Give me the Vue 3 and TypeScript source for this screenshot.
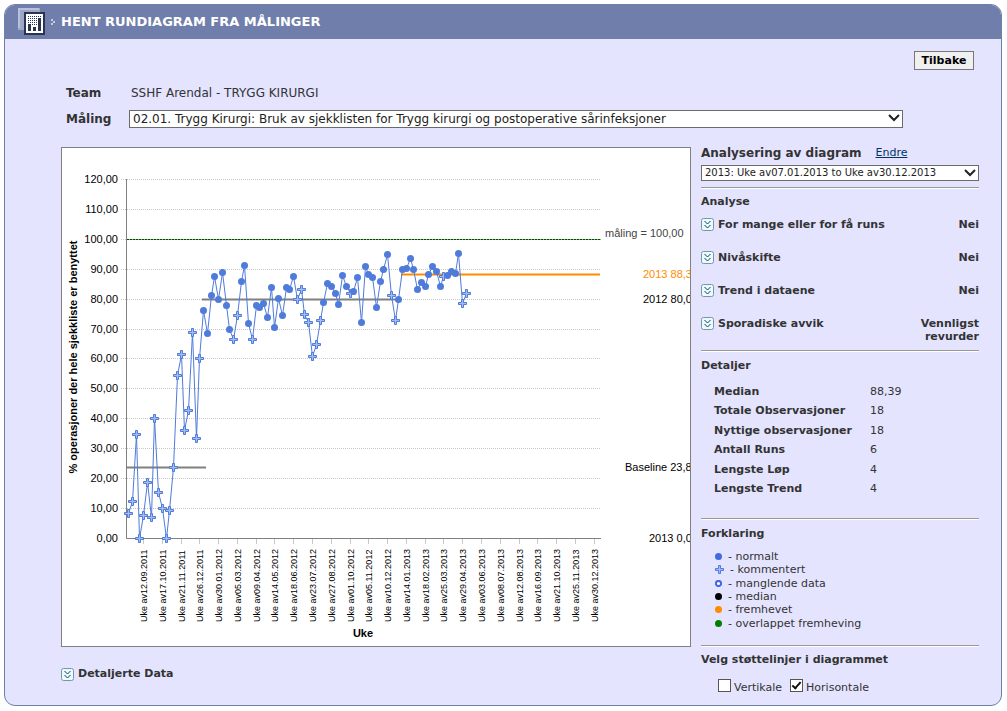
<script setup lang="ts">
import { computed, ref } from 'vue'

interface Point {
  value: number
  commented: boolean
}

// A trailing "k" marks a commented measurement.
const series =
  '8.4k 12.3k 34.8k 0k 7.6k 18.7k 7.1k 40k 15.3k 10k 0k 9.4k 23.8k 54.4k 61.4k 36.2k 42.8k 68.9k 33.5k 60.1k ' +
  '76.2 68.5 81.2 87.5 79.8 88.9 77.8 69.8 66.5k 74.6k 85.8 91.2 71.8 66.6k 77.8 77.3 78.6 73.8 83.8 70.5 80.1 ' +
  '74.5 83.8 83.2 87.5 79.8k 83.2k 74.9k 72.3k 60.8k 64.9k 72.9k 78.9 85.3 84.2 82 78.1 87.8 84.2 82k 82.5 87.2 ' +
  '72.3 90.8 88.2 87.2 77.3 85.8 89.8 94.9 81.3k 72.9k 79.8 89.8 90.2 93.5 89.8 83.2 85.6 84.2 88.3 90.8 89.2 ' +
  '84.2 87.6k 88 89.3 88.6 95.2 78.5k 82k'

const points: Point[] = series.split(' ').map((s) => ({
  value: parseFloat(s),
  commented: s.endsWith('k'),
}))

const xOf = (week: number): number => Math.floor(66.5 + week * 3.755)
const yOf = (value: number): number => Math.round(390 - value * 2.992)

const marks = points.map((p, i) => ({ ...p, x: xOf(i), y: yOf(p.value) }))
const line = marks.map((m) => `${m.x},${m.y}`).join(' ')

const levels = Array.from({ length: 13 }, (_, i) => i * 10)
const dates = [
  '12.09.2011', '17.10.2011', '21.11.2011', '26.12.2011', '30.01.2012', '05.03.2012', '09.04.2012',
  '14.05.2012', '18.06.2012', '23.07.2012', '27.08.2012', '01.10.2012', '05.11.2012', '10.12.2012',
  '14.01.2013', '18.02.2013', '25.03.2013', '29.04.2013', '03.06.2013', '08.07.2013', '12.08.2013',
  '16.09.2013', '21.10.2013', '25.11.2013', '30.12.2013',
]
const ticks = dates.map((d, i) => ({ label: `Uke av${d}`, x: xOf(4 + i * 5) }))

const vertical = ref(false)
const horizontal = ref(true)
const gridLevels = computed(() => (horizontal.value ? levels.slice(1) : []))

const analyses = [
  { name: 'For mange eller for få runs', result: 'Nei' },
  { name: 'Nivåskifte', result: 'Nei' },
  { name: 'Trend i dataene', result: 'Nei' },
  { name: 'Sporadiske avvik', result: 'Vennligst revurder' },
]

const details = [
  ['Median', '88,39'],
  ['Totale Observasjoner', '18'],
  ['Nyttige observasjoner', '18'],
  ['Antall Runs', '6'],
  ['Lengste Løp', '4'],
  ['Lengste Trend', '4'],
]

const legend = [
  { kind: 'normal', text: 'normalt' },
  { kind: 'plus', text: 'kommentert' },
  { kind: 'missing', text: 'manglende data' },
  { kind: 'median', text: 'median' },
  { kind: 'highlight', text: 'fremhevet' },
  { kind: 'overlap', text: 'overlappet fremheving' },
]
</script>

<template>
  <main class="panel">
    <header class="head">
      <svg class="logo" width="28" height="28" viewBox="0 0 28 28" shape-rendering="crispEdges" aria-hidden="true">
        <rect x="0" y="0" width="22" height="22" rx="2" fill="#9da7c8" />
        <path d="M1 20V1H21" fill="none" stroke="#b9c0d8" stroke-width="2" />
        <rect x="6" y="4" width="21" height="23" fill="#2b3350" />
        <rect x="8" y="6" width="17" height="19" fill="#fff" />
        <path d="M10 8.5H23M10 10.5H19M10 12.5H19M10 14.5H19M14 16.5H19" stroke="#2b3350" stroke-dasharray="1 1" />
        <path d="M10 23V16H13V23ZM15 23V19H18V23ZM20 23V10H23V23Z" fill="#2b3350" />
      </svg>
      <svg class="chev" width="4" height="6" viewBox="0 0 4 6" shape-rendering="crispEdges" aria-hidden="true">
        <path d="M0 0h2v2h-2zM2 2h2v2h-2zM0 4h2v2h-2z" fill="#c3cae2" />
      </svg>
      <h1>HENT RUNDIAGRAM FRA MÅLINGER</h1>
    </header>

    <div class="content">
      <div class="actions"><button type="button" class="back">Tilbake</button></div>

      <div class="row team">
        <span class="key">Team</span>
        <span>SSHF Arendal - TRYGG KIRURGI</span>
      </div>
      <div class="row measure">
        <label class="key" for="measure">Måling</label>
        <span class="pick">
          <select id="measure">
            <option>02.01. Trygg Kirurgi: Bruk av sjekklisten for Trygg kirurgi og postoperative sårinfeksjoner</option>
          </select>
          <svg class="arrow" width="12" height="8" viewBox="0 0 12 8" aria-hidden="true"><path d="M1 1L6 6L11 1" /></svg>
        </span>
      </div>

      <div class="columns">
        <section class="left">
          <svg class="chart" viewBox="0 0 628 498" role="img" aria-label="Rundiagram">
            <text class="ytitle" transform="translate(15 209) rotate(-90)" text-anchor="middle">% operasjoner der hele sjekkliste er benyttet</text>
            <text v-for="l in levels" :key="l" class="num" x="56" :y="yOf(l) + 4" text-anchor="end">{{ l }},00</text>
            <g class="grid">
              <line v-for="l in gridLevels" :key="l" x1="59" x2="538" :y1="yOf(l) + 0.5" :y2="yOf(l) + 0.5" />
            </g>
            <g v-if="vertical" class="grid">
              <line v-for="t in ticks" :key="t.label" :x1="t.x + 0.5" :x2="t.x + 0.5" y1="31" y2="390" />
            </g>
            <line class="goal" x1="65" x2="539" y1="91.5" y2="91.5" />
            <line class="goal-dash" x1="65" x2="539" y1="91.5" y2="91.5" />
            <line class="ref" x1="65" x2="144" y1="319.5" y2="319.5" />
            <line class="ref" x1="140" x2="338" y1="151.5" y2="151.5" />
            <line class="ref orange" x1="339" x2="538" y1="126.5" y2="126.5" />
            <path class="axis" d="M64.5 31V390.5H539" />
            <g v-for="t in ticks" :key="t.label">
              <line class="tick" :x1="t.x + 0.5" :x2="t.x + 0.5" y1="391" y2="396" />
              <text class="date" :transform="`translate(${t.x + 4} 474) rotate(-90)`">{{ t.label }}</text>
            </g>
            <g transform="translate(0.5 0.5)">
              <polyline class="series" :points="line" />
              <template v-for="(m, i) in marks" :key="i">
                <path v-if="m.commented" class="plus" :transform="`translate(${m.x} ${m.y})`" d="M-1 -4H1V-1H4V1H1V4H-1V1H-4V-1H-1Z" />
                <circle v-else class="dot" :cx="m.x" :cy="m.y" r="3.5" />
              </template>
            </g>
            <text class="num goal-text" x="543" y="89">måling = 100,00</text>
            <text class="num orange-text" x="581" y="130">2013 88,39</text>
            <text class="num" x="581" y="155">2012 80,00</text>
            <text class="num" x="563" y="323">Baseline 23,81</text>
            <text class="num" x="587" y="394">2013 0,00</text>
            <text class="xtitle" x="301" y="489" text-anchor="middle">Uke</text>
          </svg>
          <div class="more">
            <button type="button" class="expand" aria-label="Vis detaljerte data">
              <svg width="13" height="13" viewBox="0 0 13 13"><rect x="0.5" y="0.5" width="12" height="12" rx="2" /><path d="M3.5 3L6.5 6L9.5 3M3.5 7L6.5 10L9.5 7" /></svg>
            </button>
            <b>Detaljerte Data</b>
          </div>
        </section>

        <aside class="side">
          <div class="side-head">
            <h2><label for="period">Analysering av diagram</label></h2>
            <a href="#">Endre</a>
          </div>
          <span class="pick small">
            <select id="period">
              <option>2013: Uke av07.01.2013 to Uke av30.12.2013</option>
            </select>
            <svg class="arrow" width="12" height="8" viewBox="0 0 12 8" aria-hidden="true"><path d="M1 1L6 6L11 1" /></svg>
          </span>

          <section class="block analyse">
            <h3>Analyse</h3>
            <div v-for="a in analyses" :key="a.name" class="analysis">
              <button type="button" class="expand" :aria-label="a.name">
                <svg width="13" height="13" viewBox="0 0 13 13"><rect x="0.5" y="0.5" width="12" height="12" rx="2" /><path d="M3.5 3L6.5 6L9.5 3M3.5 7L6.5 10L9.5 7" /></svg>
              </button>
              <b class="name">{{ a.name }}</b>
              <b class="result">{{ a.result }}</b>
            </div>
          </section>

          <section class="block detail">
            <h3>Detaljer</h3>
            <dl>
              <template v-for="d in details" :key="d[0]">
                <dt>{{ d[0] }}</dt>
                <dd>{{ d[1] }}</dd>
              </template>
            </dl>
          </section>

          <section class="block explain">
            <h3>Forklaring</h3>
            <ul>
              <li v-for="g in legend" :key="g.kind">
                <svg v-if="g.kind === 'plus'" class="plus" width="9" height="9" viewBox="-4.5 -4.5 9 9"><path d="M-1 -4H1V-1H4V1H1V4H-1V1H-4V-1H-1Z" /></svg>
                <svg v-else-if="g.kind === 'missing'" class="missing" width="7" height="7" viewBox="0 0 7 7"><circle cx="3.5" cy="3.5" r="2.6" /></svg>
                <svg v-else :class="g.kind" width="7" height="7" viewBox="0 0 7 7"><circle cx="3.5" cy="3.5" r="3.5" /></svg>
                <span>- {{ g.text }}</span>
              </li>
            </ul>
          </section>

          <section class="block lines">
            <h3>Velg støttelinjer i diagrammet</h3>
            <div class="checks">
              <label><input v-model="vertical" type="checkbox" />Vertikale</label>
              <label><input v-model="horizontal" type="checkbox" />Horisontale</label>
            </div>
          </section>
        </aside>
      </div>
    </div>
  </main>
</template>

<style>
body {
  background: #fff;
}
</style>

<style scoped>
.panel {
  margin: 4px 5px 0 4px;
  border: 1px solid #6f7eaa;
  border-radius: 11px;
  background: #e4e4ff;
  overflow: hidden;
  color: #333;
  font: 11px/14px "DejaVu Sans", sans-serif;
}
h1, h2, h3, dl, dd, ul {
  margin: 0;
  padding: 0;
}
.head {
  display: flex;
  align-items: center;
  height: 34px;
  padding-left: 13px;
  background: #6f7eaa;
}
.chev {
  margin: 0 6px 0 5px;
}
h1 {
  color: #fff;
  font-size: 13px;
  line-height: 16px;
}
.content {
  padding: 12px 22px 0 56px;
}
.actions {
  display: flex;
  justify-content: flex-end;
  padding-right: 5px;
}
.back {
  width: 60px;
  height: 19px;
  padding: 0;
  border: 1px solid #777;
  background: #f0f0f0;
  color: #000;
  font: bold 11px/14px "DejaVu Sans", sans-serif;
}
.row {
  display: flex;
  align-items: center;
  padding-left: 5px;
  font-size: 12px;
}
.team {
  height: 16px;
  margin-top: 15px;
}
.measure {
  height: 18px;
  margin-top: 9px;
  padding-right: 76px;
}
.key {
  flex: 0 0 65px;
  font-weight: bold;
}
.measure .key {
  flex-basis: 63px;
}
.pick {
  display: block;
  position: relative;
  flex: 1;
}
select {
  display: block;
  width: 100%;
  height: 18px;
  padding: 0 20px 0 3px;
  border: 1px solid #6b6b6b;
  border-radius: 0;
  background: #fff;
  color: #222;
  font: 12px/14px "DejaVu Sans", sans-serif;
  appearance: none;
}
.small select {
  height: 16px;
  font-size: 10px;
}
.arrow {
  position: absolute;
  right: 3px;
  top: 4px;
  fill: none;
  stroke: #222;
  stroke-width: 2;
}
.columns {
  display: grid;
  grid-template-columns: minmax(0, 1fr) 278px;
  gap: 10px;
  margin-top: 19px;
}
.chart {
  display: block;
  box-sizing: border-box;
  width: 100%;
  height: auto;
  border: 1px solid #808080;
  background: #fff;
  overflow: hidden;
  font-family: "Liberation Sans", sans-serif;
}
.num {
  font-size: 11px;
  fill: #000;
}
.goal-text {
  fill: #444;
}
.orange-text {
  fill: #ff8c00;
}
.date {
  font-size: 9px;
  fill: #000;
}
.ytitle, .xtitle {
  font-size: 11px;
  font-weight: bold;
  fill: #000;
}
.grid line {
  stroke: #c8c8c8;
  stroke-dasharray: 1 1;
}
.goal {
  stroke: #6cc06c;
}
.goal-dash {
  stroke: #004d00;
  stroke-dasharray: 2 1;
}
.ref {
  stroke: #808080;
  stroke-width: 2;
}
.orange {
  stroke: #ff8c00;
}
.axis {
  fill: none;
  stroke: #808080;
}
.tick {
  stroke: #c8c8c8;
}
.series {
  fill: none;
  stroke: #4f7bdb;
}
.dot {
  fill: #4f7bdb;
}
.plus {
  fill: #a4bbef;
  stroke: #4f7bdb;
}
.more {
  display: flex;
  align-items: center;
  gap: 4px;
  height: 14px;
  margin: 20px 0 24px;
}
.expand {
  flex: none;
  display: block;
  width: 13px;
  height: 13px;
  padding: 0;
  border: 0;
  background: none;
}
.expand svg {
  display: block;
  fill: #e8fbff;
  stroke: #7e93a8;
}
.expand path {
  fill: none;
  stroke: #223a55;
}
.side-head {
  display: flex;
  align-items: center;
  gap: 14px;
  height: 12px;
  margin-bottom: 6px;
}
h2 {
  font-size: 12px;
}
a {
  color: #003366;
}
h3 {
  font-size: 11px;
  line-height: 14px;
}
.block {
  border-top: 1px solid #999;
  box-shadow: inset 0 1px #fff;
  padding-top: 7px;
}
.analyse {
  margin-top: 6px;
  height: 155px;
}
.analysis {
  display: flex;
  align-items: flex-start;
  height: 33px;
  gap: 4px;
  line-height: 13px;
}
.analyse h3 {
  margin-bottom: 9px;
}
.name {
  flex: 1;
}
.result {
  width: 64px;
  text-align: right;
}
.detail {
  height: 159px;
  padding-top: 8px;
}
dl {
  display: grid;
  grid-template-columns: 156px 1fr;
  grid-template-rows: repeat(6, 1fr);
  align-items: center;
  height: 117px;
  margin: 9px 0 0 13px;
}
dt {
  font-weight: bold;
}
.explain {
  height: 118px;
  padding-top: 8px;
}
ul {
  display: flex;
  flex-direction: column;
  height: 80px;
  margin: 9px 0 0 14px;
  list-style: none;
  line-height: 13px;
}
li {
  flex: 1;
  display: flex;
  align-items: center;
  gap: 6px;
}
.normal { fill: #4169e1; }
.missing { fill: #fff; stroke: #4169e1; stroke-width: 2; }
.median { fill: #000; }
.highlight { fill: #ff8c00; }
.overlap { fill: #008000; }
.checks {
  display: flex;
  gap: 8px;
  margin: 12px 0 0 17px;
}
.checks label {
  display: flex;
  align-items: flex-start;
  gap: 3px;
  line-height: 18px;
}
input {
  appearance: none;
  display: grid;
  place-items: center;
  width: 13px;
  height: 13px;
  margin: 0;
  border: 1px solid #555;
  background: #fff;
}
input:checked::before {
  content: "";
  width: 3px;
  height: 7px;
  margin-bottom: 2px;
  border: solid #111;
  border-width: 0 2px 2px 0;
  transform: rotate(42deg);
}
</style>
